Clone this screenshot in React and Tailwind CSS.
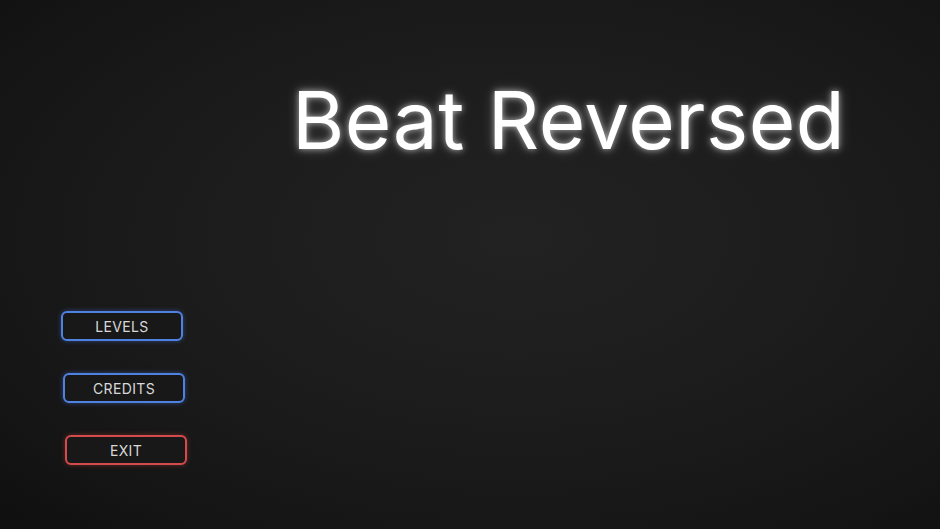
import React from 'react';

const MenuButton = ({ label, color, shift }) => {
  const styles = {
    blue: 'border-[#4f82e0] shadow-[0_0_5px_rgba(70,120,230,0.45)]',
    red: 'border-[#d44b4b] shadow-[0_0_5px_rgba(220,70,70,0.4)]',
  };
  return (
    <button
      className={`w-[122px] h-[30px] rounded-[6px] border-2 bg-[#181818] text-[14px] text-[#d8d8d8] tracking-wide ${styles[color]} ${shift}`}
      style={{ fontFamily: 'Inter, "Noto Sans", sans-serif' }}
    >
      {label}
    </button>
  );
};

export default function App() {
  return (
    <div className="relative w-[940px] h-[529px] overflow-hidden bg-[radial-gradient(ellipse_at_55%_45%,#222222_0%,#1c1c1c_45%,#151515_80%,#0f0f0f_100%)]">
      <div className="flex flex-col h-full">
        <div className="pl-[292px] pt-[72px]">
          <h1
            className="text-[80px] leading-[96px] tracking-[0.5px] text-white [text-shadow:0_0_6px_rgba(255,255,255,0.6),0_0_14px_rgba(255,255,255,0.25)]"
            style={{ fontFamily: 'Inter, "Noto Sans", sans-serif' }}
          >
            Beat Reversed
          </h1>
        </div>
        <div className="flex flex-col items-start gap-[32px] pl-[61px] mt-[143px]">
          <MenuButton label="LEVELS" color="blue" shift="ml-0" />
          <MenuButton label="CREDITS" color="blue" shift="ml-[2px]" />
          <MenuButton label="EXIT" color="red" shift="ml-[4px]" />
        </div>
      </div>
    </div>
  );
}
